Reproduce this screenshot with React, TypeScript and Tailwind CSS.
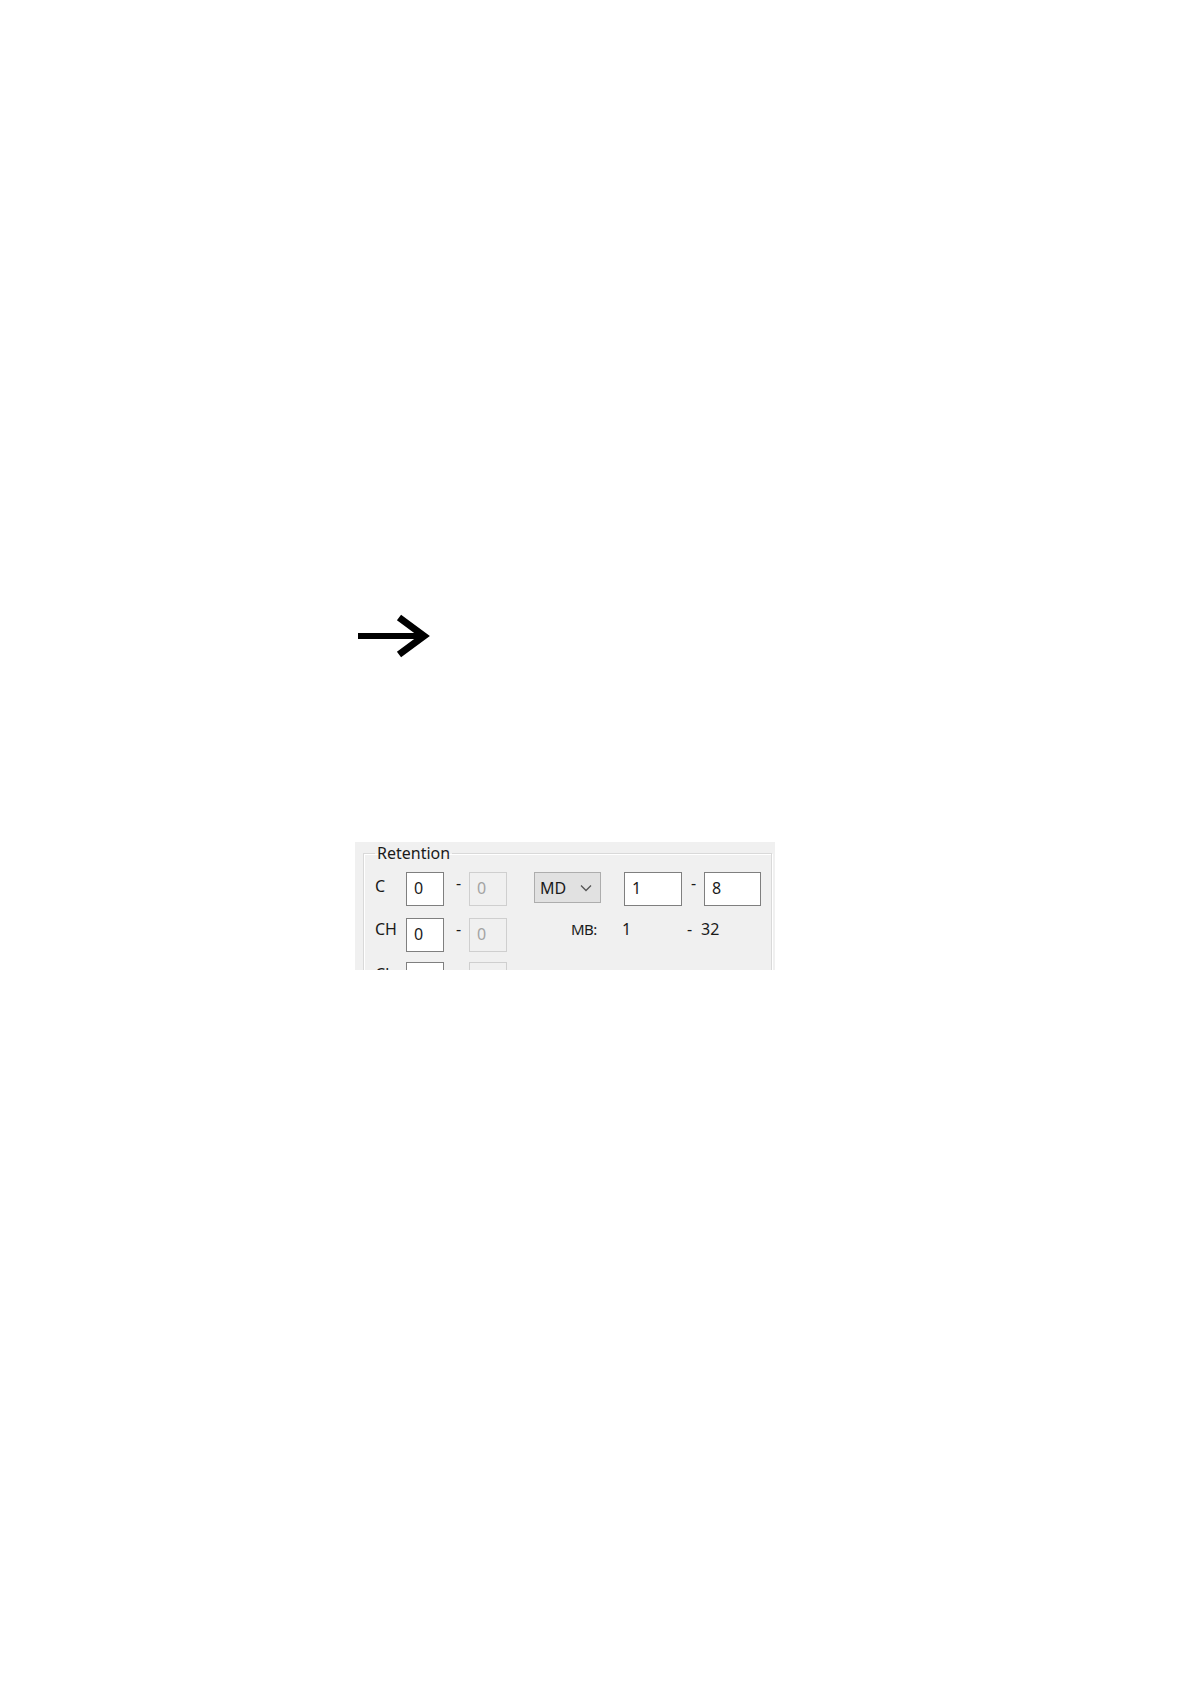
import React from 'react';

const font = { fontFamily: '"Noto Sans", "Open Sans", sans-serif' };

function Box({ w, value, disabled }: { w: string; value: string; disabled?: boolean }) {
  return (
    <div
      className={
        'h-[34px] pl-[7px] text-[16px] leading-[30px] ' +
        w +
        (disabled
          ? ' border-[1.5px] border-[#cfcfcf] bg-[#f0f0f0] text-[#a3a3a3]'
          : ' border-[1.5px] border-[#7f7f7f] bg-white text-[#1a1a1a]')
      }
    >
      {value}
    </div>
  );
}

function Arrow() {
  return (
    <svg width="74" height="46" viewBox="0 0 74 46" className="block">
      <line x1="0" y1="22" x2="64" y2="22" stroke="#000" strokeWidth="6" />
      <polyline points="41,3.5 66,22 41,40.5" fill="none" stroke="#000" strokeWidth="7" strokeLinejoin="miter" />
    </svg>
  );
}

export default function App() {
  return (
    <div className="min-h-[1684px] w-[1191px] bg-white" style={font}>
      <div className="pl-[358px] pt-[614px]">
        <Arrow />
      </div>

      <div className="ml-[355px] mt-[182px] h-[128px] w-[420px] overflow-hidden bg-[#f0f0f0]">
        <fieldset className="ml-[8px] mr-[3px] h-[200px] border border-[#d9d9d9] pl-[11px] shadow-[inset_1px_1px_0_#ffffff,1px_1px_0_#ffffff]">
          <legend className="px-[2px] text-[16px] leading-[22px] text-[#1a1a1a]">Retention</legend>

          <div className="mt-[8px] flex flex-col gap-[12px] text-[16px] text-[#1a1a1a]">
            <div className="flex h-[34px] items-start">
              <span className="w-[31px] pt-[3px] leading-[22px]">C</span>
              <Box w="w-[38px]" value="0" />
              <span className="w-[25px] pl-[12px] leading-[22px]">-</span>
              <Box w="w-[38px]" value="0" disabled />
              <div className="ml-[27px] flex h-[31px] w-[67px] items-center justify-between border border-[#adadad] bg-[#e1e1e1] pl-[5px] pr-[8px]">
                <span className="leading-[22px]">MD</span>
                <svg width="12" height="8" viewBox="0 0 12 8">
                  <polyline points="1,1.5 6,6.5 11,1.5" fill="none" stroke="#555" strokeWidth="1.3" />
                </svg>
              </div>
              <div className="ml-[23px]">
                <Box w="w-[58px]" value="1" />
              </div>
              <span className="w-[22px] pl-[9px] leading-[22px]">-</span>
              <Box w="w-[57px]" value="8" />
            </div>

            <div className="flex h-[32px] items-start">
              <span className="w-[31px] leading-[22px]">CH</span>
              <Box w="w-[38px]" value="0" />
              <span className="w-[25px] pl-[12px] leading-[22px]">-</span>
              <Box w="w-[38px]" value="0" disabled />
              <span className="ml-[64px] w-[51px] text-[15px] leading-[22px] tracking-[-0.5px]">MB:</span>
              <span className="w-[65px] leading-[22px]">1</span>
              <span className="w-[14px] leading-[22px]">-</span>
              <span className="leading-[22px]">32</span>
            </div>

            <div className="flex h-[34px] items-start">
              <span className="w-[31px] pt-[1px] leading-[22px]">CL</span>
              <Box w="w-[38px]" value="" />
              <span className="w-[25px]" />
              <Box w="w-[38px]" value="" disabled />
            </div>
          </div>
        </fieldset>
      </div>
    </div>
  );
}
